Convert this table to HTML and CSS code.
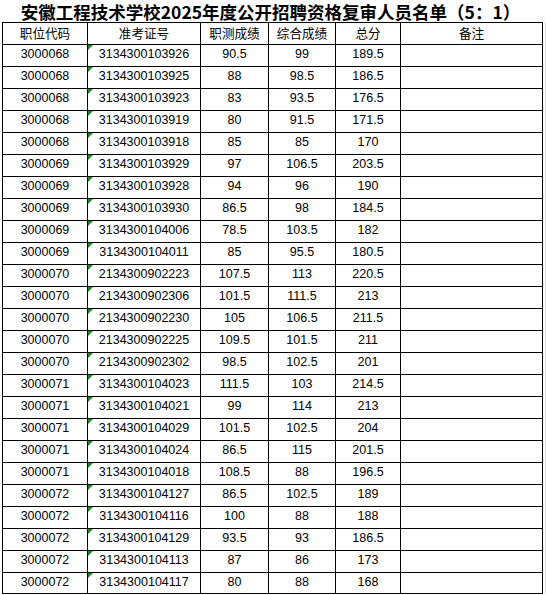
FILE: index.html
```html
<!DOCTYPE html>
<html lang="zh-CN">
<head>
<meta charset="utf-8">
<title>安徽工程技术学校2025年度公开招聘资格复审人员名单</title>
<link rel="stylesheet" href="styles.css">
</head>
<body>
<div class="sheet">
  <div class="title">安徽工程技术学校2025年度公开招聘资格复审人员名单（5：1）</div>
  <div class="grid">
    <div class="row head">
      <div class="cell cjk">职位代码</div>
      <div class="cell cjk">准考证号</div>
      <div class="cell cjk">职测成绩</div>
      <div class="cell cjk">综合成绩</div>
      <div class="cell cjk">总分</div>
      <div class="cell cjk">备注</div>
    </div>
    <div class="row"><div class="cell">3000068</div><div class="cell txt">3134300103926</div><div class="cell">90.5</div><div class="cell">99</div><div class="cell">189.5</div><div class="cell"></div></div>
    <div class="row"><div class="cell">3000068</div><div class="cell txt">3134300103925</div><div class="cell">88</div><div class="cell">98.5</div><div class="cell">186.5</div><div class="cell"></div></div>
    <div class="row"><div class="cell">3000068</div><div class="cell txt">3134300103923</div><div class="cell">83</div><div class="cell">93.5</div><div class="cell">176.5</div><div class="cell"></div></div>
    <div class="row"><div class="cell">3000068</div><div class="cell txt">3134300103919</div><div class="cell">80</div><div class="cell">91.5</div><div class="cell">171.5</div><div class="cell"></div></div>
    <div class="row"><div class="cell">3000068</div><div class="cell txt">3134300103918</div><div class="cell">85</div><div class="cell">85</div><div class="cell">170</div><div class="cell"></div></div>
    <div class="row"><div class="cell">3000069</div><div class="cell txt">3134300103929</div><div class="cell">97</div><div class="cell">106.5</div><div class="cell">203.5</div><div class="cell"></div></div>
    <div class="row"><div class="cell">3000069</div><div class="cell txt">3134300103928</div><div class="cell">94</div><div class="cell">96</div><div class="cell">190</div><div class="cell"></div></div>
    <div class="row"><div class="cell">3000069</div><div class="cell txt">3134300103930</div><div class="cell">86.5</div><div class="cell">98</div><div class="cell">184.5</div><div class="cell"></div></div>
    <div class="row"><div class="cell">3000069</div><div class="cell txt">3134300104006</div><div class="cell">78.5</div><div class="cell">103.5</div><div class="cell">182</div><div class="cell"></div></div>
    <div class="row"><div class="cell">3000069</div><div class="cell txt">3134300104011</div><div class="cell">85</div><div class="cell">95.5</div><div class="cell">180.5</div><div class="cell"></div></div>
    <div class="row"><div class="cell">3000070</div><div class="cell txt">2134300902223</div><div class="cell">107.5</div><div class="cell">113</div><div class="cell">220.5</div><div class="cell"></div></div>
    <div class="row"><div class="cell">3000070</div><div class="cell txt">2134300902306</div><div class="cell">101.5</div><div class="cell">111.5</div><div class="cell">213</div><div class="cell"></div></div>
    <div class="row"><div class="cell">3000070</div><div class="cell txt">2134300902230</div><div class="cell">105</div><div class="cell">106.5</div><div class="cell">211.5</div><div class="cell"></div></div>
    <div class="row"><div class="cell">3000070</div><div class="cell txt">2134300902225</div><div class="cell">109.5</div><div class="cell">101.5</div><div class="cell">211</div><div class="cell"></div></div>
    <div class="row"><div class="cell">3000070</div><div class="cell txt">2134300902302</div><div class="cell">98.5</div><div class="cell">102.5</div><div class="cell">201</div><div class="cell"></div></div>
    <div class="row"><div class="cell">3000071</div><div class="cell txt">3134300104023</div><div class="cell">111.5</div><div class="cell">103</div><div class="cell">214.5</div><div class="cell"></div></div>
    <div class="row"><div class="cell">3000071</div><div class="cell txt">3134300104021</div><div class="cell">99</div><div class="cell">114</div><div class="cell">213</div><div class="cell"></div></div>
    <div class="row"><div class="cell">3000071</div><div class="cell txt">3134300104029</div><div class="cell">101.5</div><div class="cell">102.5</div><div class="cell">204</div><div class="cell"></div></div>
    <div class="row"><div class="cell">3000071</div><div class="cell txt">3134300104024</div><div class="cell">86.5</div><div class="cell">115</div><div class="cell">201.5</div><div class="cell"></div></div>
    <div class="row"><div class="cell">3000071</div><div class="cell txt">3134300104018</div><div class="cell">108.5</div><div class="cell">88</div><div class="cell">196.5</div><div class="cell"></div></div>
    <div class="row"><div class="cell">3000072</div><div class="cell txt">3134300104127</div><div class="cell">86.5</div><div class="cell">102.5</div><div class="cell">189</div><div class="cell"></div></div>
    <div class="row"><div class="cell">3000072</div><div class="cell txt">3134300104116</div><div class="cell">100</div><div class="cell">88</div><div class="cell">188</div><div class="cell"></div></div>
    <div class="row"><div class="cell">3000072</div><div class="cell txt">3134300104129</div><div class="cell">93.5</div><div class="cell">93</div><div class="cell">186.5</div><div class="cell"></div></div>
    <div class="row"><div class="cell">3000072</div><div class="cell txt">3134300104113</div><div class="cell">87</div><div class="cell">86</div><div class="cell">173</div><div class="cell"></div></div>
    <div class="row last"><div class="cell">3000072</div><div class="cell txt">3134300104117</div><div class="cell">80</div><div class="cell">88</div><div class="cell">168</div><div class="cell"></div></div>
  </div>
</div>
</body>
</html>
```

FILE: styles.css
```css
html, body {
  margin: 0;
  padding: 0;
  background: #ffffff;
}

body {
  font-family: "Liberation Sans", Arial, "Noto Sans CJK SC", sans-serif;
  color: #000;
}

.sheet {
  padding-left: 2px;
  width: 541px;
}

.title {
  height: 22px;
  line-height: 23px;
  font-family: "Noto Sans CJK SC", sans-serif;
  font-weight: bold;
  font-size: 17.5px;
  text-align: center;
  white-space: nowrap;
  padding-right: 4px;
}

.grid {
  border-left: 1px solid #000;
  border-top: 1px solid #000;
  width: 540px;
  box-shadow: 2px 0 0 #fff, 3px 0 0 #d8d8d8;
}

.row {
  display: grid;
  grid-template-columns: 85px 113px 68px 67px 65px 142px;
  height: 22px;
}

.row.last {
  height: 21px;
}

.cell {
  position: relative;
  border-right: 1px solid #000;
  border-bottom: 1px solid #000;
  text-align: center;
  font-size: 12.5px;
  line-height: 19px;
  white-space: nowrap;
  overflow: hidden;
}

.row.last .cell {
  line-height: 18px;
}

.cell.cjk {
  font-family: "Noto Sans CJK SC", sans-serif;
  font-size: 12.6px;
  line-height: 20px;
}

.cell.txt::before {
  content: "";
  position: absolute;
  top: 0;
  left: 0;
  width: 0;
  height: 0;
  border-top: 5px solid #1f8a1f;
  border-right: 5px solid transparent;
}
```
